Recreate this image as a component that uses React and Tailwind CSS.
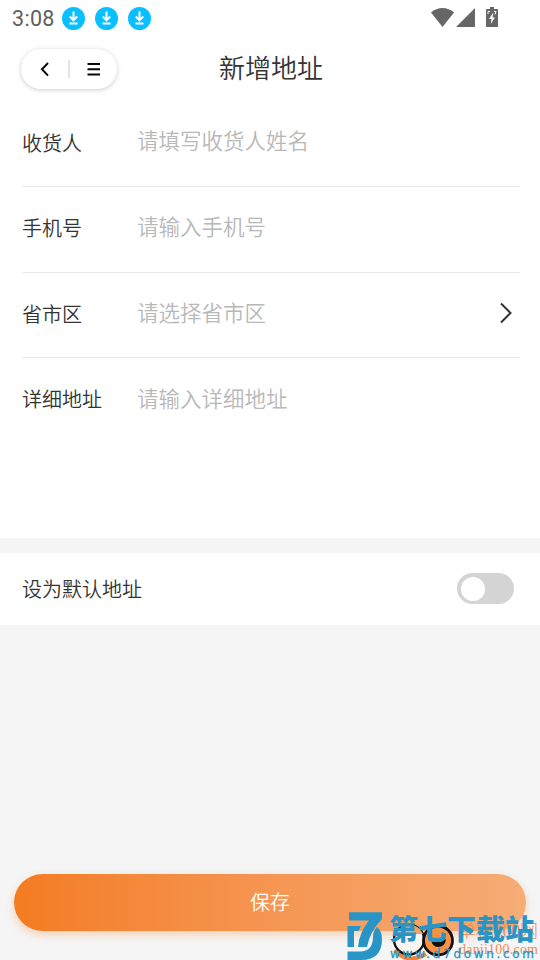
const fields = [
    { label: '收货人', placeholder: '请填写收货人姓名', height: 'h-[86px]', pad: 'pt-[27px]', inputPad: 'pt-[24px]', border: true },
    { label: '手机号', placeholder: '请输入手机号', height: 'h-[86px]', pad: 'pt-[26px]', inputPad: 'pt-[24px]', border: true },
    { label: '省市区', placeholder: '请选择省市区', height: 'h-[85px]', pad: 'pt-[26px]', inputPad: 'pt-[24px]', border: true, arrow: true },
    { label: '详细地址', placeholder: '请输入详细地址', height: 'h-[180px]', pad: 'pt-[26px]', inputPad: 'pt-[25px]' },
];

function DownloadIcon() {
    return (
        <svg width="23" height="23" viewBox="0 0 23 23">
            <circle cx="11.5" cy="11.5" r="11.5" fill="#0abfff" />
            <path d="M11.5 4.5v8.5M7.8 9.5l3.7 3.8 3.7-3.8M7.5 16.5h8" fill="none" stroke="#fff" strokeWidth="2" />
        </svg>
    );
}

function StatusBar() {
    return (
        <div className="h-[38px] flex items-start pl-3 pr-[42px] pt-[7px]">
            <span className="w-[50px] -mt-px text-[21.5px] leading-[25px] tracking-[0.3px] font-['Roboto'] text-[#606060] whitespace-nowrap">3:08</span>
            <div className="flex gap-[10px]">
                <DownloadIcon />
                <DownloadIcon />
                <DownloadIcon />
            </div>
            <div className="ml-auto flex">
                <svg width="23" height="20" viewBox="0 0 23 20">
                    <path d="M0 5.5C6.5-.5 16.5-.5 23 5.5L11.5 20z" fill="#666" />
                </svg>
                <svg className="ml-[2px]" width="19" height="20" viewBox="0 0 19 20">
                    <path d="M19 1v19H0z" fill="#666" />
                </svg>
                <svg className="ml-[11px]" width="12" height="20" viewBox="0 0 12 20">
                    <path d="M4 0h4v2h3q1 0 1 1v16q0 1-1 1H1q-1 0-1-1V3q0-1 1-1h3z" fill="#666" />
                    <path d="M7.3 5.5L3 12h2.5l-.8 5L9 10.5H6.5z" fill="#fff" />
                    <path d="M2 7V4.5h2M8 4.5h2L9 7.5" fill="none" stroke="#fff" strokeWidth="1" />
                </svg>
            </div>
        </div>
    );
}

function Header() {
    return (
        <header className="relative h-[62px] flex justify-center">
            <div className="absolute left-[21px] top-[11px] w-24 h-10 rounded-full bg-white shadow-[0_1px_5px_rgba(0,0,0,0.2)]">
                <svg width="96" height="40" viewBox="0 0 96 40" fill="none" stroke="#080808">
                    <path d="M27 14l-6 6.3 6 6.3" strokeWidth="2" />
                    <path d="M48 11v18" stroke="#ddd" strokeWidth="1.5" />
                    <path d="M66.5 15h12.5M66.5 20.3h12.5M66.5 25.5h12.5" strokeWidth="2" />
                </svg>
            </div>
            <h1 className="ml-[2px] mt-[9px] text-[26px] leading-10 font-[350] text-[#333]">新增地址</h1>
        </header>
    );
}

function Watermark() {
    return (
        <div className="absolute left-[340px] top-[900px] w-[200px] h-[60px] overflow-hidden">
            <svg width="200" height="60" viewBox="0 0 200 60">
                <path d="M55 50q12 15 31 4" fill="none" stroke="#f58235" strokeWidth="4" />
                <circle cx="69" cy="39.5" r="15" fill="#faf5f1" stroke="#111" strokeWidth="2.2" />
                <path d="M55 34q5-9 15-9 9 0 13 9z" fill="#f6a263" />
                <circle cx="98" cy="40.5" r="14.5" fill="#f99143" stroke="#111" strokeWidth="2.8" />
                <path d="M91 39q7 5 15 0-1 8-8 8-6 0-7-8z" fill="#111" />
                <text x="118" y="37" fontSize="18" textLength="80" fill="#f28b55" fontFamily="Liberation Serif, Noto Sans CJK SC, serif" fontWeight="300">单机100网</text>
                <text x="119" y="54" fontSize="14" textLength="79" fill="#f28b55" fontFamily="Liberation Serif, serif">danji100.com</text>
                <path d="M7.5 26H21l-2.5 5H14v16H7.5z" fill="#2995c6" />
                <path d="M37 27q5 4 5 12 0 21-21 21H7.5v-8.500H20q13 0 13-15 0-5 4-9.500z" fill="#2995c6" />
                <path d="M9 12.300h33V19Q30 31 27 47H18q1-14 11-26.500H9z" fill="#2995c6" />
                <text x="49" y="39.500" fontSize="28.500" fontWeight="900" textLength="145" lengthAdjust="spacingAndGlyphs" fill="#2995c6" fontFamily="Noto Sans CJK SC, sans-serif">第七下载站</text>
                <text x="50" y="58" fontSize="12" textLength="144" fill="#2995c6" stroke="#2995c6" strokeWidth="0.3" fontFamily="DejaVu Sans, sans-serif">www.d7down.com</text>
            </svg>
        </div>
    );
}

export default function App() {
    return (
        <div className="relative w-[540px] h-[960px] overflow-hidden flex flex-col bg-[#f5f5f5] font-['Noto_Sans_CJK_SC',sans-serif]">
            <div className="h-[538px] shrink-0 bg-white">
                <StatusBar />
                <Header />
                <form className="ml-[22px] mr-5 pt-px">
                    {fields.map((field) => (
                        <div key={field.label} className={`flex ${field.height} ${field.border ? 'border-b border-[#eaeaea]' : ''}`}>
                            <span className={`w-[115px] ${field.pad} text-[20px] leading-[30px] font-[350] text-[#333]`}>{field.label}</span>
                            <span className={`${field.inputPad} text-[21.5px] leading-[30px] font-[350] text-[#b8b8b8]`}>{field.placeholder}</span>
                            {field.arrow && (
                                <svg className="ml-auto mr-[7px] mt-[28px]" width="14" height="24" viewBox="0 0 14 24">
                                    <path d="M2 2.5l9.500 9.500L2 21.500" fill="none" stroke="#333" strokeWidth="2" />
                                </svg>
                            )}
                        </div>
                    ))}
                </form>
            </div>

            <div className="mt-[15px] h-[72px] shrink-0 flex items-center justify-between bg-white pl-[22px] pr-[26px] pb-px">
                <span className="text-[20px] leading-[30px] font-[350] text-[#333]">设为默认地址</span>
                <div className="w-[57px] h-[31px] rounded-full bg-[#d4d4d4] flex items-center pl-1">
                    <div className="w-6 h-6 rounded-full bg-white" />
                </div>
            </div>

            <button className="mt-auto mb-[29px] mx-[14px] h-[57px] pb-[2px] shrink-0 rounded-full bg-linear-to-r from-[#f47c20] to-[#f5ad76] text-white text-[20px] font-[350] shadow-[0_4px_9px_rgba(245,130,40,0.3)]">
                保存
            </button>

            <Watermark />
        </div>
    );
}
